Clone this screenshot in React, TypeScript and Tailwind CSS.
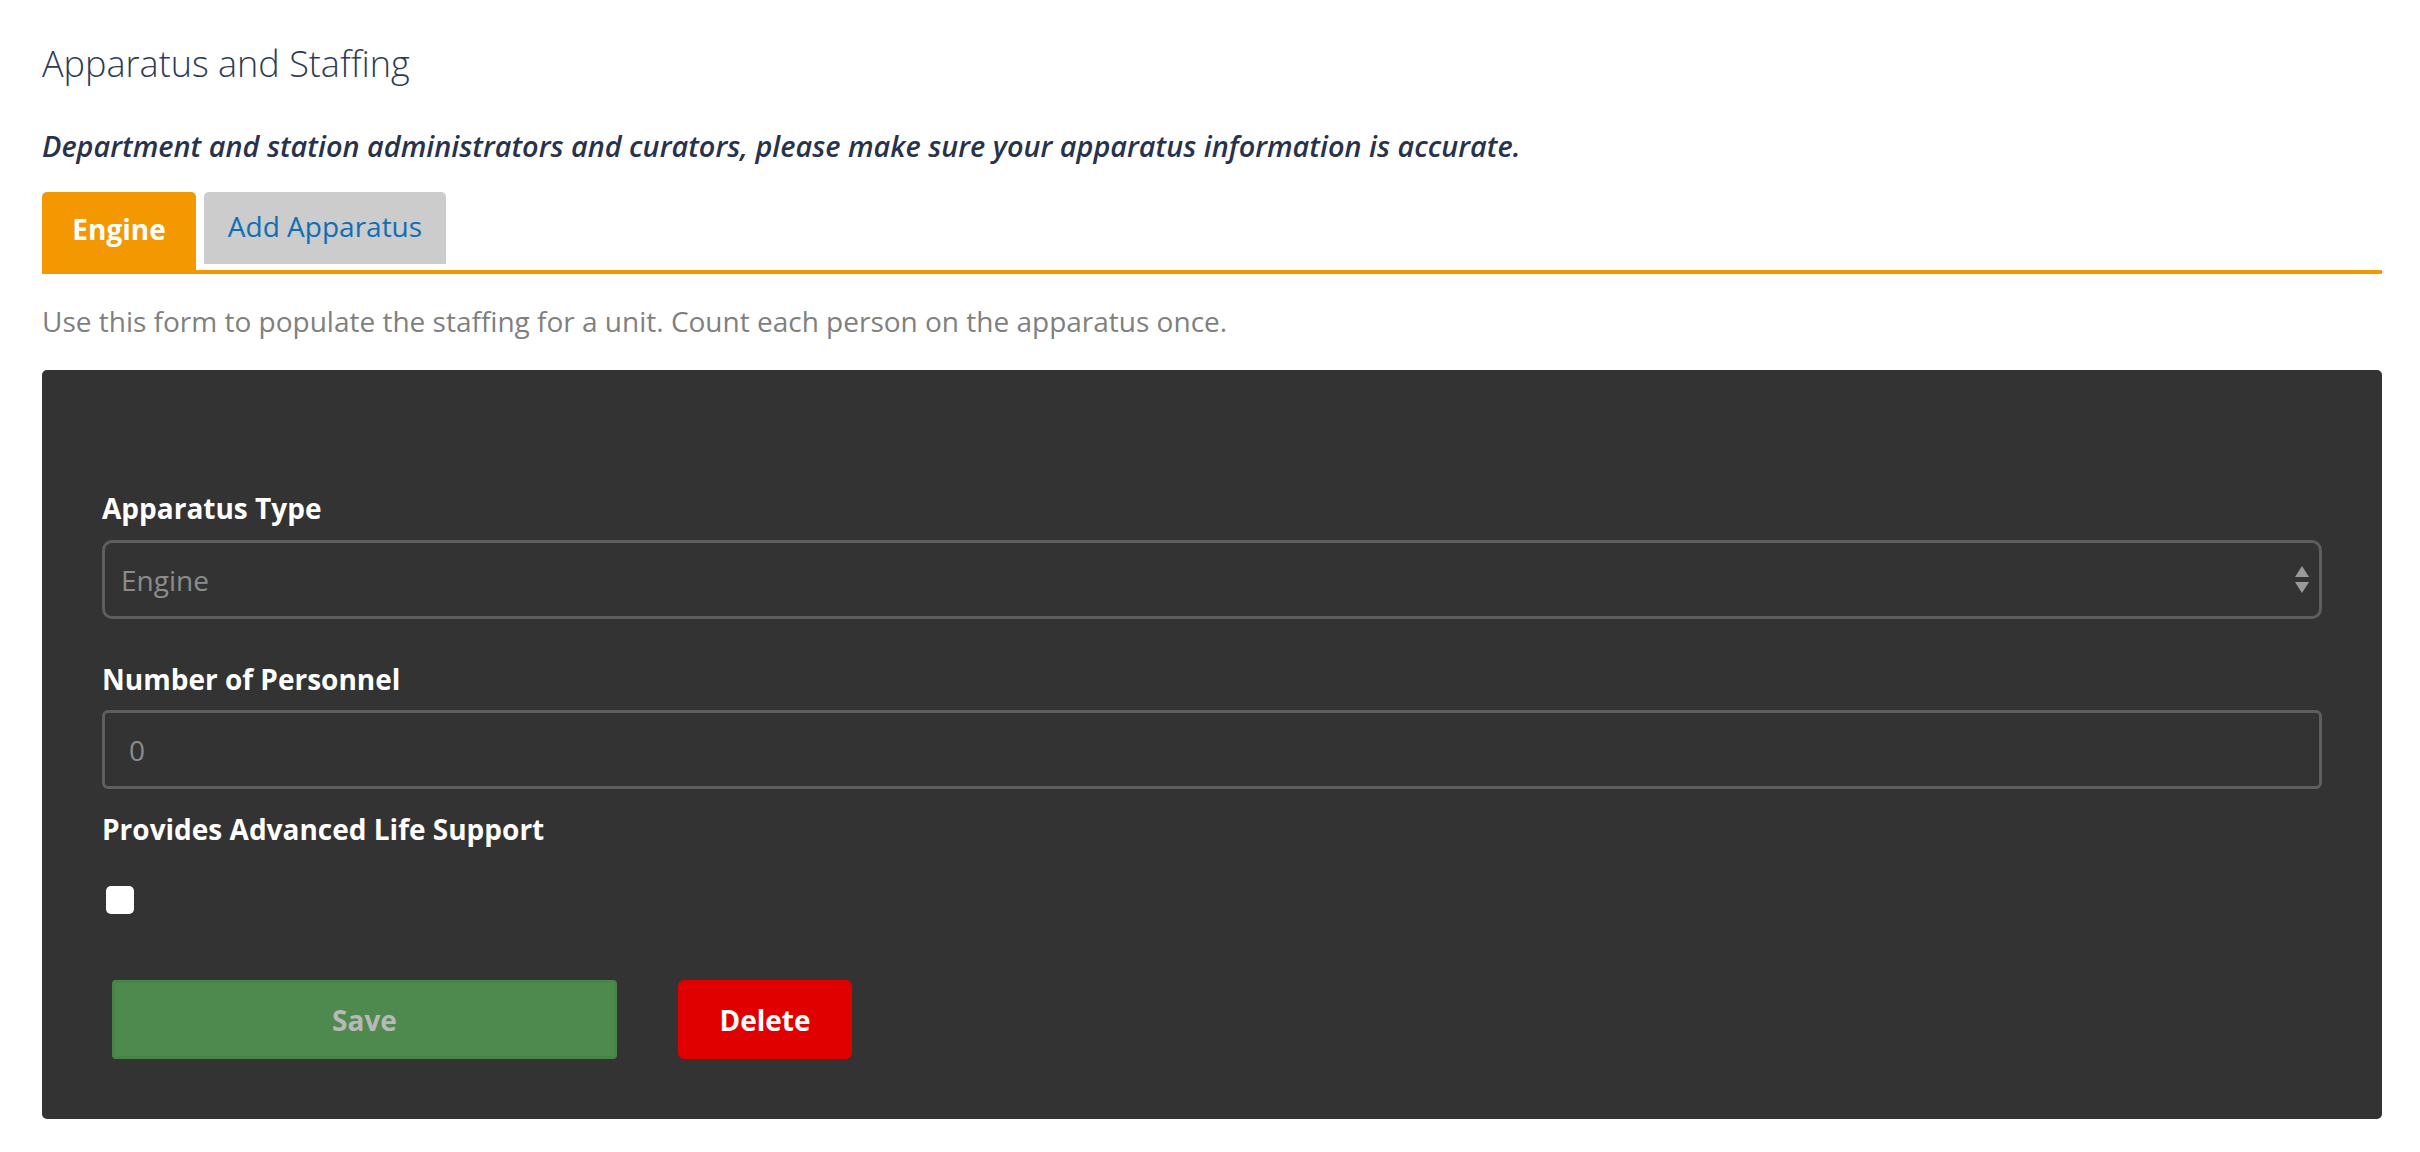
import React from "react";

// Apparatus staffing form — single-unit editor
const font = "font-['Open_Sans',sans-serif]";

function SelectArrows() {
  return (
    <svg width="14" height="27" viewBox="0 0 14 27" className="shrink-0">
      <polygon points="7,0 14,11 0,11" fill="#9a9a9a" />
      <polygon points="0,16 14,16 7,27" fill="#9a9a9a" />
    </svg>
  );
}

export default function App() {
  return (
    <div className={`min-h-[1152px] bg-white pl-[42px] pr-[38px] pt-[40px] ${font}`}>
      {/* Heading */}
      <h1 className="text-[36px] leading-[48px] font-light text-[#2c3a56]">Apparatus and Staffing</h1>
      <p className="mt-[39px] text-[28.85px] leading-[38px] font-semibold italic text-[#27324d]">
        Department and station administrators and curators, please make sure your apparatus information is accurate.
      </p>

      {/* Tabs */}
      <div className="mt-[27px]">
        <div className="flex items-start gap-[8px]">
          <div className="flex h-[78px] w-[154px] items-center justify-center rounded-t-[5px] bg-[#f39800] pb-[4px] text-[28px] leading-[38px] font-bold text-white">
            Engine
          </div>
          <div className="flex h-[72px] w-[242px] items-center justify-center rounded-t-[5px] bg-[#cccccc] pb-[4px] text-[28px] leading-[38px] text-[#0f6fb5]">
            Add Apparatus
          </div>
        </div>
        <div className="h-[4px] bg-[#f39800]" />
      </div>

      <p className="mt-[28px] text-[28px] leading-[38px] text-[#7f7f7f]">
        Use this form to populate the staffing for a unit. Count each person on the apparatus once.
      </p>

      {/* Form card */}
      <div className="mt-[30px] rounded-[5px] bg-[#333333] px-[60px] pt-[119px] pb-[60px]">
        <label className="block text-[28px] leading-[38px] font-bold text-white">Apparatus Type</label>
        <div className="mt-[13px] flex h-[79px] items-center justify-between rounded-[10px] border-[3px] border-[#5e5e5e] pl-[16px] pr-[10px]">
          <span className="text-[28px] leading-[38px] text-[#8c8c8c]">Engine</span>
          <SelectArrows />
        </div>

        <label className="mt-[41px] block text-[28px] leading-[38px] font-bold text-white">Number of Personnel</label>
        <div className="mt-[12px] flex h-[79px] items-center rounded-[6px] border-[3px] border-[#5e5e5e] pl-[24px]">
          <span className="text-[28px] leading-[38px] text-[#8c8c8c]">0</span>
        </div>

        <label className="mt-[21px] block text-[28px] leading-[38px] font-bold text-white">Provides Advanced Life Support</label>
        <div className="mt-[38px] ml-[4px] h-[28px] w-[28px] rounded-[5px] bg-white" />

        <div className="mt-[66px] flex items-center gap-[61px] pl-[10px]">
          <button className="h-[79px] w-[505px] rounded-[4px] border-[3px] border-[#478547] bg-[#4e8a4e] text-[28px] leading-[38px] font-bold text-[#b8b8b8]">
            Save
          </button>
          <button className="h-[79px] w-[174px] rounded-[6px] bg-[#e10000] text-[28px] leading-[38px] font-bold text-white">
            Delete
          </button>
        </div>
      </div>
    </div>
  );
}
